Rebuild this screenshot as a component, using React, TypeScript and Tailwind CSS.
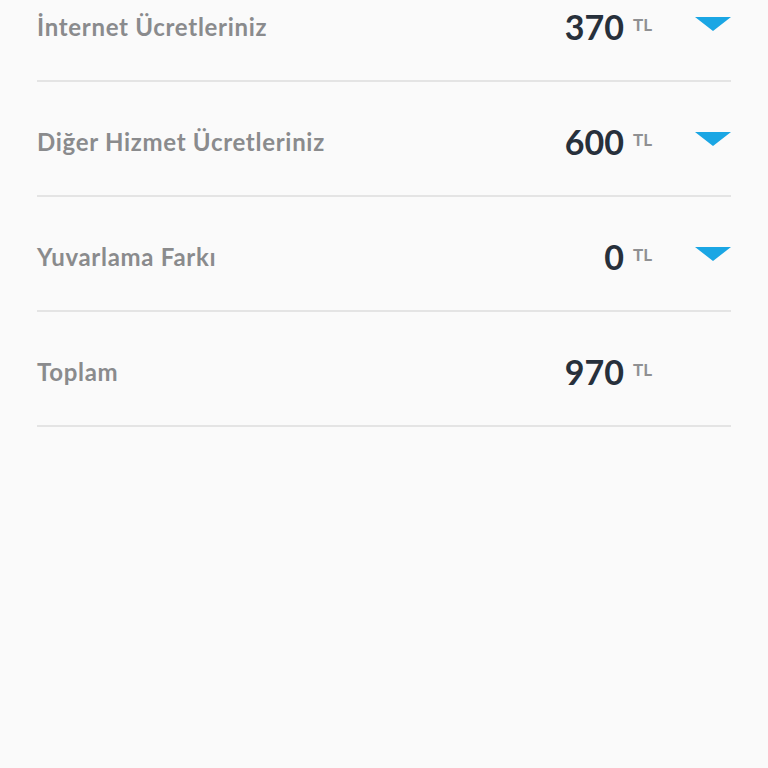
const rows = [
  { label: "İnternet Ücretleriniz", amount: "370", arrow: true },
  { label: "Diğer Hizmet Ücretleriniz", amount: "600", arrow: true },
  { label: "Yuvarlama Farkı", amount: "0", arrow: true },
  { label: "Toplam", amount: "970", arrow: false },
];

export default function App() {
  return (
    <div className="w-[768px] h-[768px] overflow-hidden bg-[#fafafa] font-['Lato',sans-serif]">
      <div className="-mt-[33px] pl-[37px] pr-[37px]">
        {rows.map((r) => (
          <div
            key={r.label}
            className="h-[115px] pt-[6px] flex items-center border-b-2 border-[#e4e4e4]"
          >
            <span className="text-[24px] font-bold text-[#8a8b8d] tracking-[0.7px]">
              {r.label}
            </span>
            <div className="ml-auto flex items-center">
              <span className="text-[34px] font-bold text-[#27303b] leading-none">
                {r.amount}
              </span>
              <span className="ml-[9px] -mt-[4px] w-[22px] text-[17px] font-bold text-[#8f9092] leading-none">
                TL
              </span>
              <div className="w-[76px] flex justify-end">
                {r.arrow && (
                  <svg width="36" height="14" viewBox="0 0 36 14" className="-mt-[6px]">
                    <polygon points="0,0 36,0 18,14" fill="#1aa6e4" />
                  </svg>
                )}
              </div>
            </div>
          </div>
        ))}
      </div>
    </div>
  );
}
